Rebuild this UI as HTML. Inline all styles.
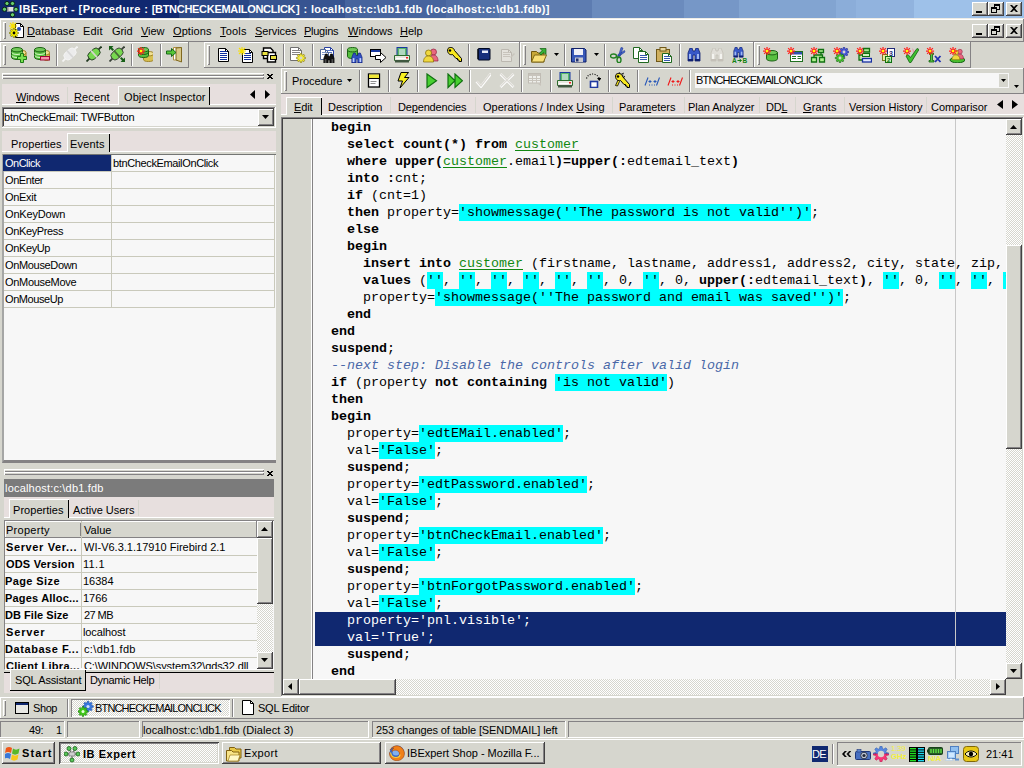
<!DOCTYPE html>
<html><head><meta charset="utf-8"><title>IBExpert</title>
<style>
html,body{margin:0;padding:0}
body{width:1024px;height:768px;overflow:hidden;background:#d6d6ce;position:relative;font-family:"Liberation Sans",sans-serif;font-size:11px;color:#000}
div,span.t,svg{position:absolute;box-sizing:border-box}
span.t{white-space:pre;line-height:13px;height:13px}
u{text-decoration:underline;text-underline-offset:1px}
.raised{background:#d6d6ce;box-shadow:inset -1px -1px #424142,inset 1px 1px #fff,inset -2px -2px #848284,inset 2px 2px #d6d6ce}
.sunken{box-shadow:inset -1px -1px #fff,inset 1px 1px #848284,inset -2px -2px #d6d6ce,inset 2px 2px #424142}
.thin{box-shadow:inset -1px -1px #fff,inset 1px 1px #848284}
.tb{box-shadow:inset -1px -1px #848284,inset 1px 1px #fff}
.dither{background:conic-gradient(#fff 25%,#d6d6ce 0 50%,#fff 0 75%,#d6d6ce 0) 0 0/2px 2px}
.code{font-family:"Liberation Mono",monospace;font-size:13.333px;line-height:17px;white-space:pre;height:17px;left:315px;color:#000}
.code b{font-weight:bold}
.code .s{background:#00ffff;display:inline-block;height:17px;vertical-align:top}
.code .g{color:#118811;text-decoration:underline;text-underline-offset:2px}
.code .c{color:#4a68a8;font-style:italic}
.sel{background:#102870;color:#fff}

</style></head>
<body>
<div class="" style="left:0px;top:0px;width:1024px;height:18px;background:linear-gradient(90deg,#102870 0px,#102870 179px,#2b4786 179px,#2b4786 249px,#375491 249px,#375491 345px,#46649e 345px,#46649e 446px,#4f6da5 446px,#4f6da5 459px,#5372a9 459px,#5372a9 499px,#5d7cb1 499px,#5d7cb1 592px,#6b8bbd 592px,#6b8bbd 684px,#7697c7 684px,#7697c7 739px,#82a4d1 739px,#82a4d1 836px,#8badd9 836px,#8badd9 856px,#91b3de 856px,#91b3de 914px,#9ec1e9 914px,#9ec1e9 1024px)"></div>
<div class="" style="left:0px;top:18px;width:1024px;height:1px;background:#eeece6"></div>
<span class="t" style="left:19px;top:3px;font-size:11px;font-weight:bold;color:#fff;letter-spacing:0.415px;">IBExpert - [Procedure : [</span>
<span class="t" style="left:155px;top:3px;font-size:11px;font-weight:bold;color:#fff;letter-spacing:-0.292px;">BTNCHECKEMAILONCLICK</span>
<span class="t" style="left:296px;top:3px;font-size:11px;font-weight:bold;color:#fff;letter-spacing:0.362px;">] : localhost:c:\db1.fdb (localhost:c:\db1.fdb)]</span>
<div class="raised" style="left:972px;top:2px;width:16px;height:14px;"></div>
<div class="" style="left:976px;top:11px;width:6px;height:2px;background:#000"></div>
<div class="raised" style="left:988px;top:2px;width:16px;height:14px;"></div>
<div class="" style="left:994px;top:4px;width:6px;height:6px;border:1px solid #000;border-top-width:2px"></div>
<div class="" style="left:991px;top:7px;width:6px;height:6px;border:1px solid #000;border-top-width:2px;background:#d6d6ce"></div>
<div class="raised" style="left:1006px;top:2px;width:16px;height:14px;"></div>
<svg style="left:1010px;top:5px" width="8" height="7" viewBox="0 0 8 7"><path d="M0 0h2l2 2 2-2h2L5 3.5 8 7H6L4 5 2 7H0l3-3.5z" fill="#000"/></svg>
<div class="raised" style="left:972px;top:24px;width:16px;height:14px;"></div>
<div class="" style="left:976px;top:33px;width:6px;height:2px;background:#000"></div>
<div class="raised" style="left:988px;top:24px;width:16px;height:14px;"></div>
<div class="" style="left:994px;top:26px;width:6px;height:6px;border:1px solid #000;border-top-width:2px"></div>
<div class="" style="left:991px;top:29px;width:6px;height:6px;border:1px solid #000;border-top-width:2px;background:#d6d6ce"></div>
<div class="raised" style="left:1006px;top:24px;width:16px;height:14px;"></div>
<svg style="left:1010px;top:27px" width="8" height="7" viewBox="0 0 8 7"><path d="M0 0h2l2 2 2-2h2L5 3.5 8 7H6L4 5 2 7H0l3-3.5z" fill="#000"/></svg>
<div class="tb" style="left:0px;top:19px;width:1024px;height:23px;"></div>
<div class="" style="left:3px;top:22px;width:3px;height:17px;box-shadow:inset 1px 1px #fff,inset -1px -1px #848284"></div>
<span class="t" style="left:27px;top:25px;font-size:11px;letter-spacing:0.058px;"><u>D</u>atabase</span>
<span class="t" style="left:83px;top:25px;font-size:11px;letter-spacing:0.177px;">Edit</span>
<span class="t" style="left:112px;top:25px;font-size:11px;letter-spacing:-0.094px;">Grid</span>
<span class="t" style="left:141px;top:25px;font-size:11px;letter-spacing:-0.052px;"><u>V</u>iew</span>
<span class="t" style="left:173px;top:25px;font-size:11px;letter-spacing:0.096px;"><u>O</u>ptions</span>
<span class="t" style="left:220px;top:25px;font-size:11px;letter-spacing:0.203px;"><u>T</u>ools</span>
<span class="t" style="left:255px;top:25px;font-size:11px;letter-spacing:-0.098px;"><u>S</u>ervices</span>
<span class="t" style="left:304px;top:25px;font-size:11px;letter-spacing:-0.263px;"><u>P</u>lugins</span>
<span class="t" style="left:348px;top:25px;font-size:11px;letter-spacing:-0.021px;"><u>W</u>indows</span>
<span class="t" style="left:400px;top:25px;font-size:11px;letter-spacing:-0.042px;"><u>H</u>elp</span>
<div class="tb" style="left:0px;top:42px;width:189px;height:26px;"></div>
<div class="" style="left:3px;top:45px;width:3px;height:20px;box-shadow:inset 1px 1px #fff,inset -1px -1px #848284"></div>
<div class="tb" style="left:204px;top:42px;width:316px;height:26px;"></div>
<div class="" style="left:207px;top:45px;width:3px;height:20px;box-shadow:inset 1px 1px #fff,inset -1px -1px #848284"></div>
<div class="tb" style="left:520px;top:42px;width:234px;height:26px;"></div>
<div class="" style="left:523px;top:45px;width:3px;height:20px;box-shadow:inset 1px 1px #fff,inset -1px -1px #848284"></div>
<div class="tb" style="left:754px;top:42px;width:217px;height:26px;"></div>
<div class="" style="left:757px;top:45px;width:3px;height:20px;box-shadow:inset 1px 1px #fff,inset -1px -1px #848284"></div>
<div class="" style="left:56px;top:44px;width:1px;height:22px;background:#848284"></div>
<div class="" style="left:57px;top:44px;width:1px;height:22px;background:#fff"></div>
<div class="" style="left:131px;top:44px;width:1px;height:22px;background:#848284"></div>
<div class="" style="left:132px;top:44px;width:1px;height:22px;background:#fff"></div>
<div class="" style="left:160px;top:44px;width:1px;height:22px;background:#848284"></div>
<div class="" style="left:161px;top:44px;width:1px;height:22px;background:#fff"></div>
<div class="" style="left:283px;top:44px;width:1px;height:22px;background:#848284"></div>
<div class="" style="left:284px;top:44px;width:1px;height:22px;background:#fff"></div>
<div class="" style="left:312px;top:44px;width:1px;height:22px;background:#848284"></div>
<div class="" style="left:313px;top:44px;width:1px;height:22px;background:#fff"></div>
<div class="" style="left:341px;top:44px;width:1px;height:22px;background:#848284"></div>
<div class="" style="left:342px;top:44px;width:1px;height:22px;background:#fff"></div>
<div class="" style="left:416px;top:44px;width:1px;height:22px;background:#848284"></div>
<div class="" style="left:417px;top:44px;width:1px;height:22px;background:#fff"></div>
<div class="" style="left:468px;top:44px;width:1px;height:22px;background:#848284"></div>
<div class="" style="left:469px;top:44px;width:1px;height:22px;background:#fff"></div>
<div class="" style="left:564px;top:44px;width:1px;height:22px;background:#848284"></div>
<div class="" style="left:565px;top:44px;width:1px;height:22px;background:#fff"></div>
<div class="" style="left:604px;top:44px;width:1px;height:22px;background:#848284"></div>
<div class="" style="left:605px;top:44px;width:1px;height:22px;background:#fff"></div>
<div class="" style="left:679px;top:44px;width:1px;height:22px;background:#848284"></div>
<div class="" style="left:680px;top:44px;width:1px;height:22px;background:#fff"></div>
<div class="" style="left:2px;top:73px;width:262px;height:3px;box-shadow:inset 1px 1px #fff,inset -1px -1px #848284"></div>
<div class="" style="left:2px;top:76px;width:262px;height:3px;box-shadow:inset 1px 1px #fff,inset -1px -1px #848284"></div>
<svg style="left:267px;top:74px" width="6" height="5" viewBox="0 0 6 5" shape-rendering="crispEdges"><path d="M0 0h2v1h2v-1h2v1h-1v1h-1v1h1v1h1v1h-2v-1h-2v1h-2v-1h1v-1h1v-1h-1v-1h-1z" fill="#000"/></svg>
<div class="" style="left:2px;top:84px;width:274px;height:20px;background:#e7dfde"></div>
<div class="" style="left:2px;top:104px;width:274px;height:1px;background:#fff"></div>
<div class="" style="left:118px;top:86px;width:92px;height:19px;background:#d6d6ce;box-shadow:inset 1px 1px #fff,inset -1px 0 #000"></div>
<div class="" style="left:67px;top:87px;width:1px;height:17px;background:#d6d6ce"></div>
<span class="t" style="left:16px;top:91px;font-size:11px;letter-spacing:-0.188px;"><u>W</u>indows</span>
<span class="t" style="left:74px;top:91px;font-size:11px;letter-spacing:0.128px;"><u>R</u>ecent</span>
<span class="t" style="left:124px;top:91px;font-size:11px;letter-spacing:0.094px;">Object Inspector</span>
<svg style="left:250px;top:90px" width="5" height="9" viewBox="0 0 5 9"><polygon points="5,0 5,9 0,4.5" fill="#000"/></svg>
<svg style="left:265px;top:90px" width="5" height="9" viewBox="0 0 5 9"><polygon points="0,0 0,9 5,4.5" fill="#000"/></svg>
<div class="sunken" style="left:2px;top:107px;width:274px;height:21px;background:#f7f7f7"></div>
<div class="raised" style="left:258px;top:109px;width:16px;height:17px;"></div>
<svg style="left:262px;top:115px" width="7" height="4" viewBox="0 0 7 4"><polygon points="0,0 7,0 3.5,4" fill="#000"/></svg>
<span class="t" style="left:4px;top:111px;font-size:11px;letter-spacing:-0.218px;">btnCheckEmail: TWFButton</span>
<div class="" style="left:2px;top:131px;width:274px;height:20px;background:#e7dfde"></div>
<div class="" style="left:2px;top:151px;width:274px;height:1px;background:#fff"></div>
<div class="" style="left:67px;top:133px;width:43px;height:19px;background:#d6d6ce;box-shadow:inset 1px 1px #fff,inset -1px 0 #000"></div>
<span class="t" style="left:11px;top:138px;font-size:11px;letter-spacing:0.040px;">Properties</span>
<span class="t" style="left:70px;top:138px;font-size:11px;letter-spacing:0.172px;">Events</span>
<div class="" style="left:2px;top:154px;width:274px;height:309px;background:#f7f7f7;border-left:2px solid #a5a6a5;border-top:1px solid #737573;border-bottom:3px solid #848284"></div>
<div class="" style="left:3px;top:155px;width:108px;height:16px;background:#102870"></div>
<span class="t" style="left:5px;top:157px;font-size:11px;color:#fff;letter-spacing:-0.503px;">OnClick</span>
<div class="" style="left:4px;top:171px;width:271px;height:1px;background:#c9c9bb"></div>
<span class="t" style="left:5px;top:174px;font-size:11px;letter-spacing:-0.411px;">OnEnter</span>
<div class="" style="left:4px;top:188px;width:271px;height:1px;background:#c9c9bb"></div>
<span class="t" style="left:5px;top:191px;font-size:11px;letter-spacing:-0.303px;">OnExit</span>
<div class="" style="left:4px;top:205px;width:271px;height:1px;background:#c9c9bb"></div>
<span class="t" style="left:5px;top:208px;font-size:11px;letter-spacing:-0.158px;">OnKeyDown</span>
<div class="" style="left:4px;top:222px;width:271px;height:1px;background:#c9c9bb"></div>
<span class="t" style="left:5px;top:225px;font-size:11px;letter-spacing:-0.361px;">OnKeyPress</span>
<div class="" style="left:4px;top:239px;width:271px;height:1px;background:#c9c9bb"></div>
<span class="t" style="left:5px;top:242px;font-size:11px;letter-spacing:-0.367px;">OnKeyUp</span>
<div class="" style="left:4px;top:256px;width:271px;height:1px;background:#c9c9bb"></div>
<span class="t" style="left:5px;top:259px;font-size:11px;letter-spacing:-0.333px;">OnMouseDown</span>
<div class="" style="left:4px;top:273px;width:271px;height:1px;background:#c9c9bb"></div>
<span class="t" style="left:5px;top:276px;font-size:11px;letter-spacing:-0.309px;">OnMouseMove</span>
<div class="" style="left:4px;top:290px;width:271px;height:1px;background:#c9c9bb"></div>
<span class="t" style="left:5px;top:293px;font-size:11px;letter-spacing:-0.408px;">OnMouseUp</span>
<div class="" style="left:4px;top:307px;width:271px;height:1px;background:#c9c9bb"></div>
<div class="" style="left:111px;top:155px;width:1px;height:153px;background:#c9c9bb"></div>
<div class="" style="left:274px;top:155px;width:1px;height:153px;background:#c9c9bb"></div>
<span class="t" style="left:113px;top:157px;font-size:11px;letter-spacing:-0.368px;">btnCheckEmailOnClick</span>
<div class="" style="left:4px;top:469px;width:260px;height:3px;box-shadow:inset 1px 1px #fff,inset -1px -1px #848284"></div>
<div class="" style="left:4px;top:472px;width:260px;height:3px;box-shadow:inset 1px 1px #fff,inset -1px -1px #848284"></div>
<svg style="left:267px;top:471px" width="6" height="5" viewBox="0 0 6 5" shape-rendering="crispEdges"><path d="M0 0h2v1h2v-1h2v1h-1v1h-1v1h1v1h1v1h-2v-1h-2v1h-2v-1h1v-1h1v-1h-1v-1h-1z" fill="#000"/></svg>
<div class="" style="left:4px;top:479px;width:270px;height:18px;background:#7b7b7b"></div>
<span class="t" style="left:5px;top:482px;font-size:11px;color:#fff;letter-spacing:0.195px;">localhost:c:\db1.fdb</span>
<div class="" style="left:4px;top:497px;width:270px;height:20px;background:#e7dfde"></div>
<div class="" style="left:4px;top:517px;width:270px;height:1px;background:#fff"></div>
<div class="" style="left:9px;top:499px;width:60px;height:19px;background:#d6d6ce;box-shadow:inset 1px 1px #fff,inset -1px 0 #000"></div>
<span class="t" style="left:13px;top:504px;font-size:11px;letter-spacing:0.040px;">Properties</span>
<span class="t" style="left:73px;top:504px;font-size:11px;letter-spacing:-0.023px;">Active Users</span>
<div class="" style="left:138px;top:500px;width:1px;height:16px;background:#d6d6ce"></div>
<div class="" style="left:4px;top:520px;width:270px;height:150px;background:#f7f7f7;border-left:1px solid #848284;border-top:1px solid #848284;border-bottom:1px solid #fff"></div>
<div class="" style="left:5px;top:521px;width:252px;height:17px;background:#d6d6ce;box-shadow:inset -1px -1px #848284,inset 1px 1px #fff"></div>
<div class="" style="left:81px;top:521px;width:1px;height:147px;background:#c9c9bb"></div>
<div class="" style="left:80px;top:523px;width:1px;height:13px;background:#848284"></div>
<span class="t" style="left:6px;top:524px;font-size:11px;letter-spacing:0.275px;">Property</span>
<span class="t" style="left:84px;top:524px;font-size:11px;letter-spacing:0.043px;">Value</span>
<span class="t" style="left:6px;top:541px;font-size:11px;font-weight:bold;letter-spacing:0.625px;">Server Ver...</span>
<span class="t" style="left:84px;top:541px;font-size:11px;letter-spacing:0.009px;">WI-V6.3.1.17910 Firebird 2.1</span>
<div class="" style="left:5px;top:555px;width:252px;height:1px;background:#c9c9bb"></div>
<span class="t" style="left:6px;top:558px;font-size:11px;font-weight:bold;letter-spacing:0.186px;">ODS Version</span>
<span class="t" style="left:83px;top:558px;font-size:11px;letter-spacing:0.302px;">11.1</span>
<div class="" style="left:5px;top:572px;width:252px;height:1px;background:#c9c9bb"></div>
<span class="t" style="left:5px;top:575px;font-size:11px;font-weight:bold;letter-spacing:0.393px;">Page Size</span>
<span class="t" style="left:83px;top:575px;font-size:11px;letter-spacing:-0.023px;">16384</span>
<div class="" style="left:5px;top:589px;width:252px;height:1px;background:#c9c9bb"></div>
<span class="t" style="left:5px;top:592px;font-size:11px;font-weight:bold;letter-spacing:0.183px;">Pages Alloc...</span>
<span class="t" style="left:83px;top:592px;font-size:11px;letter-spacing:0.005px;">1766</span>
<div class="" style="left:5px;top:606px;width:252px;height:1px;background:#c9c9bb"></div>
<span class="t" style="left:5px;top:609px;font-size:11px;font-weight:bold;letter-spacing:0.048px;">DB File Size</span>
<span class="t" style="left:84px;top:609px;font-size:11px;letter-spacing:-0.574px;">27 MB</span>
<div class="" style="left:5px;top:623px;width:252px;height:1px;background:#c9c9bb"></div>
<span class="t" style="left:6px;top:626px;font-size:11px;font-weight:bold;letter-spacing:0.847px;">Server</span>
<span class="t" style="left:83px;top:626px;font-size:11px;letter-spacing:-0.115px;">localhost</span>
<div class="" style="left:5px;top:640px;width:252px;height:1px;background:#c9c9bb"></div>
<span class="t" style="left:5px;top:643px;font-size:11px;font-weight:bold;letter-spacing:0.572px;">Database F...</span>
<span class="t" style="left:84px;top:643px;font-size:11px;letter-spacing:0.352px;">c:\db1.fdb</span>
<div class="" style="left:5px;top:657px;width:252px;height:1px;background:#c9c9bb"></div>
<div style="left:5px;top:657px;width:252px;height:12px;overflow:hidden">
<span class="t" style="left:1px;top:3px;font-size:11px;font-weight:bold;letter-spacing:0.272px;">Client Libra...</span>
<span class="t" style="left:79px;top:3px;font-size:11px;letter-spacing:-0.085px;">C:\WINDOWS\system32\gds32.dll</span>
</div>
<div class="dither" style="left:257px;top:521px;width:16px;height:148px;"></div>
<div class="raised" style="left:257px;top:521px;width:16px;height:17px;"></div>
<svg style="left:261px;top:527px" width="7" height="4" viewBox="0 0 7 4"><polygon points="0,4 7,4 3.5,0" fill="#000"/></svg>
<div class="raised" style="left:257px;top:538px;width:16px;height:66px;"></div>
<div class="raised" style="left:257px;top:652px;width:16px;height:17px;"></div>
<svg style="left:261px;top:658px" width="7" height="4" viewBox="0 0 7 4"><polygon points="0,0 7,0 3.5,4" fill="#000"/></svg>
<div class="" style="left:4px;top:672px;width:270px;height:1px;background:#000"></div>
<div class="" style="left:4px;top:673px;width:270px;height:20px;background:#e7dfde"></div>
<div class="" style="left:10px;top:670px;width:76px;height:21px;background:#d6d6ce;box-shadow:inset -1px -1px #000,inset 1px 0 #fff"></div>
<span class="t" style="left:15px;top:674px;font-size:11px;letter-spacing:-0.182px;">SQL Assistant</span>
<span class="t" style="left:90px;top:674px;font-size:11px;letter-spacing:-0.361px;">Dynamic Help</span>
<div class="" style="left:159px;top:673px;width:1px;height:16px;background:#d6d6ce"></div>
<div class="tb" style="left:281px;top:68px;width:743px;height:26px;"></div>
<div class="" style="left:284px;top:71px;width:3px;height:20px;box-shadow:inset 1px 1px #fff,inset -1px -1px #848284"></div>
<span class="t" style="left:292px;top:75px;font-size:11px;letter-spacing:-0.033px;">Procedure</span>
<svg style="left:347px;top:79px" width="5" height="3" viewBox="0 0 5 3"><polygon points="0,0 5,0 2.5,3" fill="#000"/></svg>
<div class="" style="left:359px;top:70px;width:1px;height:22px;background:#848284"></div>
<div class="" style="left:360px;top:70px;width:1px;height:22px;background:#fff"></div>
<div class="" style="left:388px;top:70px;width:1px;height:22px;background:#848284"></div>
<div class="" style="left:389px;top:70px;width:1px;height:22px;background:#fff"></div>
<div class="" style="left:417px;top:70px;width:1px;height:22px;background:#848284"></div>
<div class="" style="left:418px;top:70px;width:1px;height:22px;background:#fff"></div>
<div class="" style="left:469px;top:70px;width:1px;height:22px;background:#848284"></div>
<div class="" style="left:470px;top:70px;width:1px;height:22px;background:#fff"></div>
<div class="" style="left:521px;top:70px;width:1px;height:22px;background:#848284"></div>
<div class="" style="left:522px;top:70px;width:1px;height:22px;background:#fff"></div>
<div class="" style="left:550px;top:70px;width:1px;height:22px;background:#848284"></div>
<div class="" style="left:551px;top:70px;width:1px;height:22px;background:#fff"></div>
<div class="" style="left:579px;top:70px;width:1px;height:22px;background:#848284"></div>
<div class="" style="left:580px;top:70px;width:1px;height:22px;background:#fff"></div>
<div class="" style="left:608px;top:70px;width:1px;height:22px;background:#848284"></div>
<div class="" style="left:609px;top:70px;width:1px;height:22px;background:#fff"></div>
<div class="" style="left:637px;top:70px;width:1px;height:22px;background:#848284"></div>
<div class="" style="left:638px;top:70px;width:1px;height:22px;background:#fff"></div>
<div class="" style="left:689px;top:70px;width:1px;height:22px;background:#848284"></div>
<div class="" style="left:690px;top:70px;width:1px;height:22px;background:#fff"></div>
<div class="" style="left:695px;top:73px;width:314px;height:15px;background:#f7f7f7"></div>
<span class="t" style="left:696px;top:74px;font-size:11px;letter-spacing:-0.838px;">BTNCHECKEMAILONCLICK</span>
<div class="" style="left:999px;top:74px;width:9px;height:13px;background:#d6d6ce"></div>
<svg style="left:1001px;top:79px" width="5" height="3" viewBox="0 0 5 3"><polygon points="0,0 5,0 2.5,3" fill="#000"/></svg>
<svg style="left:1014px;top:85px" width="5" height="3" viewBox="0 0 5 3"><polygon points="0,0 5,0 2.5,3" fill="#000"/></svg>
<div class="" style="left:281px;top:94px;width:743px;height:20px;background:#e7dfde"></div>
<div class="" style="left:281px;top:114px;width:743px;height:1px;background:#fff"></div>
<div class="" style="left:286px;top:97px;width:36px;height:18px;background:#d6d6ce;box-shadow:inset 1px 1px #fff,inset -1px 0 #000"></div>
<span class="t" style="left:294px;top:101px;font-size:11px;letter-spacing:-0.156px;"><u>E</u>dit</span>
<span class="t" style="left:328px;top:101px;font-size:11px;letter-spacing:-0.053px;">Description</span>
<span class="t" style="left:398px;top:101px;font-size:11px;letter-spacing:-0.168px;">De<u>p</u>endencies</span>
<span class="t" style="left:483px;top:101px;font-size:11px;letter-spacing:0.018px;">Operations / Index <u>U</u>sing</span>
<span class="t" style="left:619px;top:101px;font-size:11px;letter-spacing:-0.040px;">Para<u>m</u>eters</span>
<span class="t" style="left:688px;top:101px;font-size:11px;letter-spacing:-0.064px;">Plan Analyzer</span>
<span class="t" style="left:766px;top:101px;font-size:11px;letter-spacing:-0.258px;">DD<u>L</u></span>
<span class="t" style="left:803px;top:101px;font-size:11px;letter-spacing:0.097px;"><u>G</u>rants</span>
<span class="t" style="left:849px;top:101px;font-size:11px;letter-spacing:-0.035px;">Version History</span>
<span class="t" style="left:931px;top:101px;font-size:11px;letter-spacing:-0.040px;">Comparisor</span>
<div class="" style="left:390px;top:97px;width:1px;height:16px;background:#d6d6ce"></div>
<div class="" style="left:475px;top:97px;width:1px;height:16px;background:#d6d6ce"></div>
<div class="" style="left:612px;top:97px;width:1px;height:16px;background:#d6d6ce"></div>
<div class="" style="left:684px;top:97px;width:1px;height:16px;background:#d6d6ce"></div>
<div class="" style="left:759px;top:97px;width:1px;height:16px;background:#d6d6ce"></div>
<div class="" style="left:795px;top:97px;width:1px;height:16px;background:#d6d6ce"></div>
<div class="" style="left:844px;top:97px;width:1px;height:16px;background:#d6d6ce"></div>
<div class="" style="left:926px;top:97px;width:1px;height:16px;background:#d6d6ce"></div>
<svg style="left:997px;top:100px" width="6" height="9" viewBox="0 0 6 9"><polygon points="6,0 6,9 0,4.5" fill="#000"/></svg>
<svg style="left:1012px;top:100px" width="6" height="9" viewBox="0 0 6 9"><polygon points="0,0 0,9 6,4.5" fill="#000"/></svg>
<div class="sunken" style="left:281px;top:117px;width:743px;height:580px;background:#f7f7f7"></div>
<div class="" style="left:283px;top:119px;width:28px;height:560px;background:#d6d6ce"></div>
<div class="" style="left:311px;top:119px;width:1px;height:560px;background:#fff"></div>
<div class="" style="left:312px;top:119px;width:1px;height:560px;background:#848284"></div>
<div class="" style="left:955px;top:119px;width:1px;height:560px;background:#c8c8c8"></div>
<div class="" style="left:315px;top:612px;width:691px;height:34px;background:#102870"></div>
<div class="" style="left:955px;top:612px;width:1px;height:34px;background:#c8c8c8"></div>
<div class="dither" style="left:1006px;top:119px;width:16px;height:560px;"></div>
<div class="raised" style="left:1006px;top:119px;width:16px;height:16px;"></div>
<svg style="left:1010px;top:125px" width="7" height="4" viewBox="0 0 7 4"><polygon points="0,4 7,4 3.5,0" fill="#000"/></svg>
<div class="raised" style="left:1006px;top:245px;width:16px;height:204px;"></div>
<div class="raised" style="left:1006px;top:663px;width:16px;height:16px;"></div>
<svg style="left:1010px;top:669px" width="7" height="4" viewBox="0 0 7 4"><polygon points="0,0 7,0 3.5,4" fill="#000"/></svg>
<div class="dither" style="left:283px;top:679px;width:723px;height:16px;"></div>
<div class="raised" style="left:283px;top:679px;width:16px;height:16px;"></div>
<svg style="left:288px;top:683px" width="4" height="7" viewBox="0 0 4 7"><polygon points="4,0 4,7 0,3.5" fill="#000"/></svg>
<div class="raised" style="left:299px;top:679px;width:97px;height:16px;"></div>
<div class="raised" style="left:990px;top:679px;width:16px;height:16px;"></div>
<svg style="left:996px;top:683px" width="4" height="7" viewBox="0 0 4 7"><polygon points="0,0 0,7 4,3.5" fill="#000"/></svg>
<div class="" style="left:1006px;top:679px;width:16px;height:16px;background:#d6d6ce"></div>
<div style="left:315px;top:119px;width:691px;height:560px;overflow:hidden">
<div class="code" style="left:0;top:0px;">  <b>begin</b></div>
<div class="code" style="left:0;top:17px;">    <b>select</b> <b>count</b><b>(*)</b> <b>from</b> <span class="g">customer</span></div>
<div class="code" style="left:0;top:34px;">    <b>where</b> <b>upper</b><b>(</b><span class="g">customer</span>.email<b>)=</b><b>upper</b><b>(:</b>edtemail_text<b>)</b></div>
<div class="code" style="left:0;top:51px;">    <b>into</b> <b>:</b>cnt;</div>
<div class="code" style="left:0;top:68px;">    <b>if</b> (cnt=1)</div>
<div class="code" style="left:0;top:85px;">    <b>then</b> property=<span class="s">&#x27;showmessage(&#x27;&#x27;The password is not valid&#x27;&#x27;)&#x27;</span>;</div>
<div class="code" style="left:0;top:102px;">    <b>else</b></div>
<div class="code" style="left:0;top:119px;">    <b>begin</b></div>
<div class="code" style="left:0;top:136px;">      <b>insert</b> <b>into</b> <span class="g">customer</span> (firstname, lastname, address1, address2, city, state, zip, </div>
<div class="code" style="left:0;top:153px;">      <b>values</b> (<span class="s">&#x27;&#x27;</span>, <span class="s">&#x27;&#x27;</span>, <span class="s">&#x27;&#x27;</span>, <span class="s">&#x27;&#x27;</span>, <span class="s">&#x27;&#x27;</span>, <span class="s">&#x27;&#x27;</span>, 0, <span class="s">&#x27;&#x27;</span>, 0, <b>upper</b><b>(:</b>edtemail_text<b>)</b>, <span class="s">&#x27;&#x27;</span>, 0, <span class="s">&#x27;&#x27;</span>, <span class="s">&#x27;&#x27;</span>, <span class="s">&#x27;&#x27;</span>,</div>
<div class="code" style="left:0;top:170px;">      property=<span class="s">&#x27;showmessage(&#x27;&#x27;The password and email was saved&#x27;&#x27;)&#x27;</span>;</div>
<div class="code" style="left:0;top:187px;">    <b>end</b></div>
<div class="code" style="left:0;top:204px;">  <b>end</b></div>
<div class="code" style="left:0;top:221px;">  <b>suspend</b>;</div>
<div class="code" style="left:0;top:238px;">  <span class="c">--next step: Disable the controls after valid login</span></div>
<div class="code" style="left:0;top:255px;">  <b>if</b> (property <b>not</b> <b>containing</b> <span class="s">&#x27;is not valid&#x27;</span>)</div>
<div class="code" style="left:0;top:272px;">  <b>then</b></div>
<div class="code" style="left:0;top:289px;">  <b>begin</b></div>
<div class="code" style="left:0;top:306px;">    property=<span class="s">&#x27;edtEMail.enabled&#x27;</span>;</div>
<div class="code" style="left:0;top:323px;">    val=<span class="s">&#x27;False&#x27;</span>;</div>
<div class="code" style="left:0;top:340px;">    <b>suspend</b>;</div>
<div class="code" style="left:0;top:357px;">    property=<span class="s">&#x27;edtPassword.enabled&#x27;</span>;</div>
<div class="code" style="left:0;top:374px;">    val=<span class="s">&#x27;False&#x27;</span>;</div>
<div class="code" style="left:0;top:391px;">    <b>suspend</b>;</div>
<div class="code" style="left:0;top:408px;">    property=<span class="s">&#x27;btnCheckEmail.enabled&#x27;</span>;</div>
<div class="code" style="left:0;top:425px;">    val=<span class="s">&#x27;False&#x27;</span>;</div>
<div class="code" style="left:0;top:442px;">    <b>suspend</b>;</div>
<div class="code" style="left:0;top:459px;">    property=<span class="s">&#x27;btnForgotPassword.enabled&#x27;</span>;</div>
<div class="code" style="left:0;top:476px;">    val=<span class="s">&#x27;False&#x27;</span>;</div>
<div class="code" style="left:0;top:493px;color:#fff;">    property=&#x27;pnl.visible&#x27;;</div>
<div class="code" style="left:0;top:510px;color:#fff;">    val=&#x27;True&#x27;;</div>
<div class="code" style="left:0;top:527px;">    <b>suspend</b>;</div>
<div class="code" style="left:0;top:544px;">  <b>end</b></div>
</div>
<div class="tb" style="left:0px;top:697px;width:1024px;height:22px;"></div>
<div class="" style="left:3px;top:700px;width:3px;height:16px;box-shadow:inset 1px 1px #fff,inset -1px -1px #848284"></div>
<span class="t" style="left:33px;top:702px;font-size:11px;letter-spacing:-0.401px;">Shop</span>
<div class="" style="left:67px;top:699px;width:1px;height:18px;background:#848284"></div>
<div class="" style="left:68px;top:699px;width:1px;height:18px;background:#fff"></div>
<div class="dither" style="left:71px;top:699px;width:159px;height:18px;box-shadow:inset 1px 1px #848284,inset -1px -1px #fff"></div>
<span class="t" style="left:95px;top:702px;font-size:11px;letter-spacing:-0.838px;">BTNCHECKEMAILONCLICK</span>
<div class="" style="left:232px;top:699px;width:1px;height:18px;background:#848284"></div>
<div class="" style="left:233px;top:699px;width:1px;height:18px;background:#fff"></div>
<span class="t" style="left:258px;top:702px;font-size:11px;letter-spacing:-0.212px;">SQL Editor</span>
<div class="thin" style="left:0px;top:721px;width:65px;height:17px;"></div>
<div class="thin" style="left:67px;top:721px;width:73px;height:17px;"></div>
<div class="thin" style="left:142px;top:721px;width:227px;height:17px;"></div>
<div class="thin" style="left:372px;top:721px;width:194px;height:17px;"></div>
<div class="thin" style="left:568px;top:721px;width:456px;height:17px;"></div>
<span class="t" style="left:29px;top:724px;font-size:11px;letter-spacing:-0.398px;">49:</span>
<span class="t" style="left:56px;top:724px;font-size:11px;">1</span>
<span class="t" style="left:143px;top:724px;font-size:11px;letter-spacing:0.082px;">localhost:c:\db1.fdb (Dialect 3)</span>
<span class="t" style="left:376px;top:724px;font-size:11px;letter-spacing:-0.108px;">253 changes of table [SENDMAIL] left</span>
<div class="" style="left:0px;top:739px;width:1024px;height:1px;background:#fff"></div>
<div class="raised" style="left:2px;top:742px;width:53px;height:22px;"></div>
<span class="t" style="left:22px;top:747px;font-size:11px;font-weight:bold;letter-spacing:1.109px;">Start</span>
<div class="dither" style="left:59px;top:742px;width:160px;height:22px;box-shadow:inset 1px 1px #424142,inset -1px -1px #fff,inset 2px 2px #848284,inset -2px -2px #d6d6ce"></div>
<span class="t" style="left:83px;top:748px;font-size:11px;font-weight:bold;letter-spacing:0.525px;">IB Expert</span>
<div class="raised" style="left:222px;top:742px;width:159px;height:22px;"></div>
<span class="t" style="left:244px;top:747px;font-size:11px;letter-spacing:0.341px;">Export</span>
<div class="raised" style="left:385px;top:742px;width:160px;height:22px;"></div>
<span class="t" style="left:407px;top:747px;font-size:11px;letter-spacing:-0.006px;">IBExpert Shop - Mozilla F...</span>
<div class="" style="left:812px;top:746px;width:16px;height:16px;background:#102870"></div>
<span class="t" style="left:812px;top:748px;font-size:11px;color:#fff;letter-spacing:-0.781px;">DE</span>
<div class="" style="left:832px;top:744px;width:1px;height:20px;background:#848284"></div>
<div class="" style="left:833px;top:744px;width:1px;height:20px;background:#fff"></div>
<div class="thin" style="left:837px;top:742px;width:185px;height:24px;"></div>
<svg style="left:842px;top:751px" width="9" height="6" viewBox="0 0 9 6"><path d="M3 0h1.500L2 3l2.500 3H3L0.300 3zM7.500 0H9L6.500 3 9 6H7.500L4.800 3z" fill="#000" stroke="#000" stroke-width=".5"/></svg>
<span class="t" style="left:986px;top:748px;font-size:11px;letter-spacing:-0.008px;">21:41</span>
<svg style="left:9px;top:22px" width="16" height="16" viewBox="0 0 16 16"><path d="M6.5 1.5h5l3 3v11h-8z" fill="#fff" stroke="#000"/><path d="M11.5 1.5v3h3" fill="none" stroke="#000"/><path d="M4 0v8M0 4h8M1 1l6 6M7 1l-6 6" stroke="#f8e000" stroke-width="1.100"/><circle cx="10" cy="7" r="2" fill="#2848b0"/><polygon points="9.56,10.40 9.56,11.60 8.20,11.86 7.87,12.65 8.65,13.80 7.80,14.65 6.65,13.87 5.86,14.20 5.60,15.56 4.40,15.56 4.14,14.20 3.35,13.87 2.20,14.65 1.35,13.80 2.13,12.65 1.80,11.86 0.44,11.60 0.44,10.40 1.80,10.14 2.13,9.35 1.35,8.20 2.20,7.35 3.35,8.13 4.14,7.80 4.40,6.44 5.60,6.44 5.86,7.80 6.65,8.13 7.80,7.35 8.65,8.20 7.87,9.35 8.20,10.14" fill="#f8f000" stroke="#606000" stroke-width=".6"/><circle cx="5" cy="11" r="1.38" fill="#000"/></svg>
<svg style="left:11px;top:47px" width="16" height="16" viewBox="0 0 16 16"><path d="M9 5.7v4.6a3.0 2.2 0 0 0 6 0v-4.6z" fill="#d8c050" stroke="#a08428" stroke-width="1"/><ellipse cx="12.0" cy="5.7" rx="3.0" ry="2.2" fill="#f0e090" stroke="#a08428" stroke-width="1"/><path d="M0.5 2.7v7.6a5.5 2.2 0 0 0 11 0v-7.6z" fill="#58c040" stroke="#1c6414" stroke-width="1"/><ellipse cx="6.0" cy="2.7" rx="5.5" ry="2.2" fill="#70c858" stroke="#1c6414" stroke-width="1"/><path d="M1 5.500a5 2 0 0 0 10 0M1 8.500a5 2 0 0 0 10 0" stroke="#d8f8c8" fill="none"/><path d="M9.500 6.500h3v3h3v3h-3v3h-3v-3h-3v-3h3z" fill="#78e050" stroke="#1c7c14"/></svg>
<svg style="left:34px;top:47px" width="16" height="16" viewBox="0 0 16 16"><path d="M9.5 5.7v5.6a3.0 2.2 0 0 0 6 0v-5.6z" fill="#d8c050" stroke="#a08428" stroke-width="1"/><ellipse cx="12.5" cy="5.7" rx="3.0" ry="2.2" fill="#f0e090" stroke="#a08428" stroke-width="1"/><path d="M0.5 2.7v7.6a5.5 2.2 0 0 0 11 0v-7.6z" fill="#58c040" stroke="#1c6414" stroke-width="1"/><ellipse cx="6.0" cy="2.7" rx="5.5" ry="2.2" fill="#70c858" stroke="#1c6414" stroke-width="1"/><path d="M1 5.500a5 2 0 0 0 10 0M1 8.500a5 2 0 0 0 10 0" stroke="#d8f8c8" fill="none"/><rect x="6.500" y="9.500" width="9" height="3.500" fill="#f890a8" stroke="#a00838"/></svg>
<svg style="left:62px;top:46px" width="16" height="16" viewBox="0 0 16 16"><path d="M0.500 15.500L15.500 0.500" stroke="#f4f4f4" stroke-width="1.800"/><g transform="rotate(-42 8 8)"><rect x="1.500" y="4" width="13" height="8" rx="3.500" fill="#ececec" stroke="#f4f4f4" stroke-width=".9"/><rect x="7.200" y="3.500" width="1.600" height="9" fill="#d8d8d8"/></g></svg>
<svg style="left:86px;top:46px" width="16" height="16" viewBox="0 0 16 16"><path d="M0.500 15.500L15.500 0.500" stroke="#203820" stroke-width="1.800"/><g transform="rotate(-42 8 8)"><rect x="1.500" y="4" width="13" height="8" rx="3.500" fill="#78d850" stroke="#203820" stroke-width=".9"/><rect x="7.200" y="3.500" width="1.600" height="9" fill="#d6d6ce"/></g></svg>
<svg style="left:109px;top:46px" width="16" height="16" viewBox="0 0 16 16"><path d="M0.500 15.500L15.500 0.500" stroke="#384038" stroke-width="1.800"/><g transform="rotate(-42 8 8)"><rect x="1.500" y="4" width="13" height="8" rx="3.500" fill="#78d850" stroke="#384038" stroke-width=".9"/><rect x="7.200" y="3.500" width="1.600" height="9" fill="#486838"/></g><path d="M0 0h4.500l-1.500 1.500 2 2-1.500 1.500-2-2L0 4.500z" fill="#186018"/><g transform="rotate(180 8 8)"><path d="M0 0h4.500l-1.500 1.500 2 2-1.500 1.500-2-2L0 4.500z" fill="#186018"/></g></svg>
<svg style="left:137px;top:47px" width="16" height="16" viewBox="0 0 16 16"><path d="M6.5 6.7v5.6a5.0 2.2 0 0 0 10 0v-5.6z" fill="#d8c050" stroke="#a08428" stroke-width="1"/><ellipse cx="11.5" cy="6.7" rx="5.0" ry="2.2" fill="#f0e090" stroke="#a08428" stroke-width="1"/><path d="M1.5 2.7v5.6a5.0 2.2 0 0 0 10 0v-5.6z" fill="#58c040" stroke="#1c6414" stroke-width="1"/><ellipse cx="6.5" cy="2.7" rx="5.0" ry="2.2" fill="#70c858" stroke="#1c6414" stroke-width="1"/><path d="M2 5.500a4.500 2 0 0 0 9 0" stroke="#186018" fill="none"/><g transform="scale(1.15)"><path d="M3.5 0v7M0 3.500h7M1 1l5 5M6 1l-5 5" stroke="#f22" stroke-width="1.1" fill="none"/><rect x="2.500" y="2.500" width="2" height="2" fill="#ff0"/></g></svg>
<svg style="left:166px;top:47px" width="16" height="16" viewBox="0 0 16 16"><path d="M7.500 0.500h8v12.500h-8z" fill="#fff" stroke="#b09040"/><path d="M10 1l5.500-.5v14.500l-5.500-2z" fill="#d8c888" stroke="#806820"/><path d="M0.500 4h5v-2.500l4.500 4-4.500 4v-2.500h-5z" fill="#58c838" stroke="#186818"/></svg>
<svg style="left:217px;top:47px" width="16" height="16" viewBox="0 0 16 16"><path d="M1.5 1.5h7l3 3v10h-10z" fill="#fff" stroke="#000"/><path d="M8.5 1.5v3h3" fill="none" stroke="#000"/><rect x="3" y="4" width="7" height="1" fill="#1030a0"/><rect x="3" y="6" width="7" height="1" fill="#1030a0"/><rect x="3" y="8" width="7" height="1" fill="#1030a0"/><rect x="3" y="10" width="7" height="1" fill="#1030a0"/><rect x="3" y="12" width="7" height="1" fill="#1030a0"/></svg>
<svg style="left:238px;top:47px" width="16" height="16" viewBox="0 0 16 16"><path d="M4.5 2.5h7l3 3v10h-10z" fill="#fff" stroke="#000"/><path d="M11.5 2.5v3h3" fill="none" stroke="#000"/><rect x="6" y="6" width="7" height="1" fill="#1030a0"/><rect x="6" y="8" width="7" height="1" fill="#1030a0"/><rect x="6" y="10" width="7" height="1" fill="#1030a0"/><rect x="6" y="12" width="7" height="1" fill="#1030a0"/><path d="M4 0v8M0 4h8M1 1l6 6M7 1l-6 6" stroke="#f8e000" stroke-width="1.100"/></svg>
<svg style="left:261px;top:47px" width="16" height="16" viewBox="0 0 16 16"><path d="M2.500 1h7l2.500 2.500v8h-9.500z" fill="#fff" stroke="#000" stroke-width="1.400"/><path d="M6.500 5.500h8v9.500h-8z" fill="#fff" stroke="#000" stroke-width="1.400"/><rect x="1" y="4.500" width="6" height="4" fill="#e8e040" stroke="#000"/><rect x="9.500" y="8.500" width="6" height="4" fill="#e8e040" stroke="#000"/></svg>
<svg style="left:290px;top:47px" width="16" height="16" viewBox="0 0 16 16"><path d="M0.5 0.5h8l3 3v10h-11z" fill="#fff" stroke="#707070"/><path d="M8.5 0.5v3h3" fill="none" stroke="#707070"/><rect x="2" y="3" width="8" height="1" fill="#848284"/><rect x="2" y="5" width="8" height="1" fill="#848284"/><rect x="2" y="7" width="8" height="1" fill="#848284"/><polygon points="15.56,10.40 15.56,11.60 14.20,11.86 13.87,12.65 14.65,13.80 13.80,14.65 12.65,13.87 11.86,14.20 11.60,15.56 10.40,15.56 10.14,14.20 9.35,13.87 8.20,14.65 7.35,13.80 8.13,12.65 7.80,11.86 6.44,11.60 6.44,10.40 7.80,10.14 8.13,9.35 7.35,8.20 8.20,7.35 9.35,8.13 10.14,7.80 10.40,6.44 11.60,6.44 11.86,7.80 12.65,8.13 13.80,7.35 14.65,8.20 13.87,9.35 14.20,10.14" fill="#f0e838" stroke="#807000" stroke-width=".6"/><circle cx="11" cy="11" r="1.38" fill="#d6d6ce"/></svg>
<svg style="left:319px;top:47px" width="16" height="16" viewBox="0 0 16 16"><path d="M5.5 0.5h6l3 3v8h-9z" fill="#fff" stroke="#2840a0"/><path d="M11.5 0.5v3h3" fill="none" stroke="#2840a0"/><rect x="7" y="3" width="6" height="1" fill="#5878c8"/><rect x="7" y="5" width="6" height="1" fill="#5878c8"/><path d="M1.5 2.5h5l3 3v7h-8z" fill="#fff" stroke="#506898"/><path d="M6.5 2.5v3h3" fill="none" stroke="#506898"/><rect x="3" y="5" width="5" height="1" fill="#8098c8"/><rect x="3" y="7" width="5" height="1" fill="#8098c8"/><g transform="translate(4 7) scale(0.85)"><path d="M1 5l2-5h2l1 3h2l1-3h2l2 5v8h-5v-6h-2v6h-5z" fill="#101010" stroke="#000" stroke-width=".8"/><rect x="2" y="6" width="2" height="5" fill="#505050"/><rect x="10" y="6" width="2" height="5" fill="#505050"/><rect x="1" y="11" width="5" height="2" fill="#000"/><rect x="8" y="11" width="5" height="2" fill="#000"/></g></svg>
<svg style="left:347px;top:47px" width="16" height="16" viewBox="0 0 16 16"><path d="M0.5 2.7v6.6a5.0 2.2 0 0 0 10 0v-6.6z" fill="#58c040" stroke="#1c6414" stroke-width="1"/><ellipse cx="5.5" cy="2.7" rx="5.0" ry="2.2" fill="#70c858" stroke="#1c6414" stroke-width="1"/><g transform="translate(4 6) scale(0.85)"><path d="M1 5l2-5h2l1 3h2l1-3h2l2 5v8h-5v-6h-2v6h-5z" fill="#3050c0" stroke="#102080" stroke-width=".8"/><rect x="2" y="6" width="2" height="5" fill="#c0d0ff"/><rect x="10" y="6" width="2" height="5" fill="#c0d0ff"/><rect x="1" y="11" width="5" height="2" fill="#102080"/><rect x="8" y="11" width="5" height="2" fill="#102080"/></g></svg>
<svg style="left:370px;top:47px" width="16" height="16" viewBox="0 0 16 16"><rect x="0.500" y="2.500" width="10" height="7" fill="#fff" stroke="#000"/><rect x="1" y="3" width="9" height="2" fill="#1838a0"/><path d="M5.500 8.500h5v-3l5.500 5-5.500 5v-3h-5z" fill="#fff" stroke="#000"/></svg>
<svg style="left:394px;top:47px" width="16" height="16" viewBox="0 0 16 16"><rect x="3" y="0.500" width="10" height="9" fill="#58b868" stroke="#1838a0"/><rect x="5" y="2" width="6" height="6" fill="#b0d8c0"/><path d="M0.500 8.500h15v5h-15z" fill="#e8e8e0" stroke="#2c6c2c"/><rect x="1" y="13" width="14" height="2.500" fill="#405840"/><rect x="2" y="11" width="10" height="1" fill="#fff"/><rect x="12" y="10" width="2" height="1.500" fill="#f02020"/></svg>
<svg style="left:423px;top:48px" width="16" height="16" viewBox="0 0 16 16"><circle cx="10.500" cy="4" r="3" fill="#e86880" stroke="#902040" stroke-width=".7"/><path d="M6 13c0-4 2-6 4.500-6s4.500 2 4.500 6z" fill="#e86880" stroke="#902040" stroke-width=".7"/><circle cx="5.500" cy="5" r="3" fill="#f0d840" stroke="#806800" stroke-width=".7"/><path d="M0.500 14c0-4 2-6 5-6s5 2 5 6z" fill="#f0d840" stroke="#806800" stroke-width=".7"/></svg>
<svg style="left:446px;top:47px" width="16" height="16" viewBox="0 0 16 16"><path d="M2 1.500c2-2 6-1 6.500 2l7 8v3h-2.500v-1.500h-1.500v-1.500h-1.500l-3.500-4c-3 1-6-2-4.500-6z" fill="#f8e820" stroke="#000" stroke-width="1"/><circle cx="4" cy="3.500" r="1.200" fill="#000"/></svg>
<svg style="left:476px;top:48px" width="16" height="16" viewBox="0 0 16 16"><rect x="2" y="0.500" width="12" height="11.500" rx="1" fill="#18307c" stroke="#000820"/><rect x="6" y="2.500" width="6" height="2.500" fill="#e8ecf8"/><path d="M1 2h2M1 4h2M1 6h2M1 8h2M1 10h2" stroke="#000"/></svg>
<svg style="left:500px;top:48px" width="16" height="16" viewBox="0 0 16 16"><path d="M1.5 1.5h7l3 3v9h-10z" fill="#e4e2dc" stroke="#bcb8b0"/><path d="M8.5 1.5v3h3" fill="none" stroke="#bcb8b0"/><rect x="3" y="4" width="7" height="1" fill="#c8c4bc"/><rect x="3" y="6" width="7" height="1" fill="#c8c4bc"/><rect x="3" y="8" width="7" height="1" fill="#c8c4bc"/><path d="M10 9l4-4 1 1-4 4z" fill="#c8c4bc"/></svg>
<svg style="left:531px;top:48px" width="16" height="16" viewBox="0 0 16 16"><path d="M0.500 3.500h5l1.500 1.500h6v9h-12.500z" fill="#c8a838" stroke="#705810"/><path d="M0.500 14l3-7h12l-3 7z" fill="#f8e078" stroke="#806818"/><path d="M9 0.500h6v6l-2-2-3 2.500-1.500-1.500 2.500-3z" fill="#38b038" stroke="#106010" stroke-width=".7"/></svg>
<svg style="left:554px;top:53px" width="5" height="3" viewBox="0 0 5 3"><polygon points="0,0 5,0 2.5,3" fill="#000"/></svg>
<svg style="left:571px;top:48px" width="16" height="16" viewBox="0 0 16 16"><path d="M0.500 0.500h13l1.500 1.500v12h-14.500z" fill="#3858b8" stroke="#102068"/><rect x="3" y="1" width="9" height="6" fill="#f0f0f8"/><rect x="4" y="9.500" width="8" height="4.500" fill="#c8c8d0"/><rect x="5" y="10.500" width="2.500" height="3" fill="#203070"/></svg>
<svg style="left:594px;top:53px" width="5" height="3" viewBox="0 0 5 3"><polygon points="0,0 5,0 2.5,3" fill="#000"/></svg>
<svg style="left:610px;top:47px" width="16" height="16" viewBox="0 0 16 16"><path d="M8.500 9L11 0.500l2 .5L10 9.500zM7.500 8L14.500 3.500l.5 1.500-6.500 4.500z" fill="#4868d0" stroke="#203890" stroke-width=".6"/><ellipse cx="3.500" cy="9" rx="3" ry="2" fill="none" stroke="#208020" stroke-width="1.400"/><ellipse cx="9" cy="13" rx="2" ry="2.700" fill="none" stroke="#208020" stroke-width="1.400"/><path d="M6 9.500l3 1" stroke="#208020" stroke-width="1.500"/></svg>
<svg style="left:633px;top:47px" width="16" height="16" viewBox="0 0 16 16"><path d="M0.5 0.5h6l3 3v8h-9z" fill="#fff" stroke="#206820"/><path d="M6.5 0.5v3h3" fill="none" stroke="#206820"/><path d="M5.5 4.5h7l3 3v8h-10z" fill="#fff" stroke="#206820"/><path d="M12.5 4.5v3h3" fill="none" stroke="#206820"/><rect x="7" y="8" width="7" height="1" fill="#3858b0"/><rect x="7" y="10" width="7" height="1" fill="#3858b0"/><rect x="7" y="12" width="7" height="1" fill="#3858b0"/></svg>
<svg style="left:656px;top:47px" width="16" height="16" viewBox="0 0 16 16"><rect x="0.500" y="2.500" width="13" height="12" fill="#d0b060" stroke="#705818"/><rect x="4" y="0.500" width="6" height="3.500" fill="#e8d8a0" stroke="#705818"/><path d="M6.5 6.5h6l3 3v6h-9z" fill="#fff" stroke="#206820"/><path d="M12.5 6.5v3h3" fill="none" stroke="#206820"/><rect x="8" y="9" width="6" height="1" fill="#3858b0"/><rect x="8" y="11" width="6" height="1" fill="#3858b0"/><rect x="8" y="13" width="6" height="1" fill="#3858b0"/></svg>
<svg style="left:686px;top:48px" width="16" height="16" viewBox="0 0 16 16"><g transform="translate(1 0) scale(1.0)"><path d="M1 5l2-5h2l1 3h2l1-3h2l2 5v8h-5v-6h-2v6h-5z" fill="#3858c8" stroke="#102070" stroke-width=".8"/><rect x="2" y="6" width="2" height="5" fill="#a0b8f0"/><rect x="10" y="6" width="2" height="5" fill="#a0b8f0"/><rect x="1" y="11" width="5" height="2" fill="#102070"/><rect x="8" y="11" width="5" height="2" fill="#102070"/></g></svg>
<svg style="left:709px;top:48px" width="16" height="16" viewBox="0 0 16 16"><g transform="translate(1 0) scale(1.0)"><path d="M1 5l2-5h2l1 3h2l1-3h2l2 5v8h-5v-6h-2v6h-5z" fill="#e0ded8" stroke="#c4c0b8" stroke-width=".8"/><rect x="2" y="6" width="2" height="5" fill="#f4f4f0"/><rect x="10" y="6" width="2" height="5" fill="#f4f4f0"/><rect x="1" y="11" width="5" height="2" fill="#c4c0b8"/><rect x="8" y="11" width="5" height="2" fill="#c4c0b8"/></g></svg>
<svg style="left:732px;top:47px" width="16" height="16" viewBox="0 0 16 16"><g transform="translate(1 0) scale(0.78)"><path d="M1 5l2-5h2l1 3h2l1-3h2l2 5v8h-5v-6h-2v6h-5z" fill="#3858c8" stroke="#102070" stroke-width=".8"/><rect x="2" y="6" width="2" height="5" fill="#a0b8f0"/><rect x="10" y="6" width="2" height="5" fill="#a0b8f0"/><rect x="1" y="11" width="5" height="2" fill="#102070"/><rect x="8" y="11" width="5" height="2" fill="#102070"/></g><text x="0" y="16" font-family="Liberation Sans" font-weight="bold" font-size="6.500" fill="#108010">A</text><path d="M5.500 13.500h3.500M7.500 12l2 1.500-2 1.500" stroke="#108010" fill="none" stroke-width="1"/><text x="10.500" y="16" font-family="Liberation Sans" font-weight="bold" font-size="6.500" fill="#108010">B</text></svg>
<svg style="left:763px;top:47px" width="16" height="16" viewBox="0 0 16 16"><path d="M3.5 5.7v6.1a5.5 2.2 0 0 0 11 0v-6.1z" fill="#58c040" stroke="#1c6414" stroke-width="1"/><ellipse cx="9.0" cy="5.7" rx="5.5" ry="2.2" fill="#70c858" stroke="#1c6414" stroke-width="1"/><g transform="scale(1.15)"><path d="M3.5 0v7M0 3.500h7M1 1l5 5M6 1l-5 5" stroke="#f22" stroke-width="1.1" fill="none"/><rect x="2.500" y="2.500" width="2" height="2" fill="#ff0"/></g></svg>
<svg style="left:787px;top:47px" width="16" height="16" viewBox="0 0 16 16"><rect x="3.500" y="4.500" width="12" height="10" fill="#fff" stroke="#207020"/><rect x="4" y="5" width="11" height="2.500" fill="#3050b0"/><path d="M5 9.500h4M5 11.500h4M10.500 9.500h3.500M10.500 11.500h3.500" stroke="#207020"/><g transform="scale(1.15)"><path d="M3.5 0v7M0 3.500h7M1 1l5 5M6 1l-5 5" stroke="#f22" stroke-width="1.1" fill="none"/><rect x="2.500" y="2.500" width="2" height="2" fill="#ff0"/></g></svg>
<svg style="left:810px;top:47px" width="16" height="16" viewBox="0 0 16 16"><path d="M8.500 2.500h5v3h-5zM1.500 10.500h5v4.500h-5zM9.500 10.500h5v4.500h-5zM11 5.500v2.500M4 10.500v-2.500h8.500v2.500" fill="#b0f090" stroke="#107010" stroke-width="1.300"/><g transform="scale(1.15)"><path d="M3.5 0v7M0 3.500h7M1 1l5 5M6 1l-5 5" stroke="#f22" stroke-width="1.1" fill="none"/><rect x="2.500" y="2.500" width="2" height="2" fill="#ff0"/></g></svg>
<svg style="left:833px;top:47px" width="16" height="16" viewBox="0 0 16 16"><polygon points="15.76,4.38 15.76,5.62 14.34,5.90 13.99,6.73 14.81,7.93 13.93,8.81 12.73,7.99 11.90,8.34 11.62,9.76 10.38,9.76 10.10,8.34 9.27,7.99 8.07,8.81 7.19,7.93 8.01,6.73 7.66,5.90 6.24,5.62 6.24,4.38 7.66,4.10 8.01,3.27 7.19,2.07 8.07,1.19 9.27,2.01 10.10,1.66 10.38,0.24 11.62,0.24 11.90,1.66 12.73,2.01 13.93,1.19 14.81,2.07 13.99,3.27 14.34,4.10" fill="#4858d8" stroke="#182088" stroke-width=".6"/><circle cx="11" cy="5" r="1.44" fill="#d6d6ce"/><polygon points="11.76,10.38 11.76,11.62 10.34,11.90 9.99,12.73 10.81,13.93 9.93,14.81 8.73,13.99 7.90,14.34 7.62,15.76 6.38,15.76 6.10,14.34 5.27,13.99 4.07,14.81 3.19,13.93 4.01,12.73 3.66,11.90 2.24,11.62 2.24,10.38 3.66,10.10 4.01,9.27 3.19,8.07 4.07,7.19 5.27,8.01 6.10,7.66 6.38,6.24 7.62,6.24 7.90,7.66 8.73,8.01 9.93,7.19 10.81,8.07 9.99,9.27 10.34,10.10" fill="#48c030" stroke="#106010" stroke-width=".6"/><circle cx="7" cy="11" r="1.44" fill="#d6d6ce"/><g transform="scale(1.15)"><path d="M3.5 0v7M0 3.500h7M1 1l5 5M6 1l-5 5" stroke="#f22" stroke-width="1.1" fill="none"/><rect x="2.500" y="2.500" width="2" height="2" fill="#ff0"/></g></svg>
<svg style="left:856px;top:47px" width="16" height="16" viewBox="0 0 16 16"><path d="M7.500 1.500h6v3.500h-6zM3 5v8h3M3 8h3" fill="#a8e890" stroke="#107010" stroke-width="1.300"/><rect x="6.500" y="6.500" width="7" height="3" fill="#d0f0c0" stroke="#107010"/><rect x="6.500" y="11.500" width="9" height="3.500" fill="#e0e8ff" stroke="#1830a0" stroke-width="1.300"/><g transform="scale(1.15)"><path d="M3.5 0v7M0 3.500h7M1 1l5 5M6 1l-5 5" stroke="#f22" stroke-width="1.1" fill="none"/><rect x="2.500" y="2.500" width="2" height="2" fill="#ff0"/></g></svg>
<svg style="left:879px;top:47px" width="16" height="16" viewBox="0 0 16 16"><rect x="8.500" y="1.500" width="7" height="8" fill="#fff" stroke="#202878"/><text x="10" y="8.500" font-family="Liberation Sans" font-weight="bold" font-size="7" fill="#202878">3</text><rect x="3.500" y="7.500" width="5" height="6" fill="#e8e8a0" stroke="#787820"/><rect x="6.500" y="9.500" width="6" height="6" fill="#c8f0b0" stroke="#107010"/><text x="8" y="15" font-family="Liberation Sans" font-weight="bold" font-size="6" fill="#107010">2</text><g transform="scale(1.15)"><path d="M3.5 0v7M0 3.500h7M1 1l5 5M6 1l-5 5" stroke="#f22" stroke-width="1.1" fill="none"/><rect x="2.500" y="2.500" width="2" height="2" fill="#ff0"/></g></svg>
<svg style="left:903px;top:47px" width="16" height="16" viewBox="0 0 16 16"><path d="M9 1l3 3-2 2z" fill="#e0a0b0"/><path d="M3 9l2-1.500 2.500 3L14 1.500l2 1L8 15.500H6.500z" fill="#40c030" stroke="#106010" stroke-width=".8"/><g transform="scale(1.15)"><path d="M3.5 0v7M0 3.500h7M1 1l5 5M6 1l-5 5" stroke="#f22" stroke-width="1.1" fill="none"/><rect x="2.500" y="2.500" width="2" height="2" fill="#ff0"/></g></svg>
<svg style="left:926px;top:47px" width="16" height="16" viewBox="0 0 16 16"><path d="M3.500 6h4v1.500h-1v6h1.500v1.500h-5v-1.500h1.500v-6h-1z" fill="#58c840" stroke="#106010" stroke-width=".8"/><path d="M9 9l5.500 6M14.500 9l-5.500 6" stroke="#2030b0" stroke-width="1.800"/><g transform="scale(1.15)"><path d="M3.5 0v7M0 3.500h7M1 1l5 5M6 1l-5 5" stroke="#f22" stroke-width="1.1" fill="none"/><rect x="2.500" y="2.500" width="2" height="2" fill="#ff0"/></g></svg>
<svg style="left:949px;top:47px" width="16" height="16" viewBox="0 0 16 16"><ellipse cx="8.500" cy="13" rx="7.500" ry="2.800" fill="#48c030" stroke="#106010"/><g transform="translate(2.500 1.500) scale(.8)"><circle cx="10.500" cy="4" r="3" fill="#e86880" stroke="#902040" stroke-width=".7"/><path d="M6 13c0-4 2-6 4.500-6s4.500 2 4.500 6z" fill="#e86880" stroke="#902040" stroke-width=".7"/><circle cx="5.500" cy="5" r="3" fill="#f0d840" stroke="#806800" stroke-width=".7"/><path d="M0.500 14c0-4 2-6 5-6s5 2 5 6z" fill="#f0d840" stroke="#806800" stroke-width=".7"/></g><g transform="scale(1.15)"><path d="M3.5 0v7M0 3.500h7M1 1l5 5M6 1l-5 5" stroke="#f22" stroke-width="1.1" fill="none"/><rect x="2.500" y="2.500" width="2" height="2" fill="#ff0"/></g></svg>
<svg style="left:367px;top:73px" width="16" height="16" viewBox="0 0 16 16"><rect x="1.500" y="1" width="11" height="13" fill="#fff" stroke="#000" stroke-width="1.300"/><rect x="2" y="1.500" width="10" height="3.500" fill="#f0e838"/><path d="M2 5.500h10" stroke="#000"/><path d="M3.500 8.500h6M3.500 10.500h5" stroke="#909090"/></svg>
<svg style="left:395px;top:72px" width="16" height="16" viewBox="0 0 16 16"><path d="M6 0.500h7.500l-4 5h4.500l-9 10.500 2.500-7h-4.500z" fill="#f8f020" stroke="#000" stroke-width="1"/></svg>
<svg style="left:425px;top:73px" width="16" height="16" viewBox="0 0 16 16"><path d="M2 1v13.500l9.500-6.750z" fill="#48d030" stroke="#107010" stroke-width="1.200"/></svg>
<svg style="left:447px;top:73px" width="16" height="16" viewBox="0 0 16 16"><path d="M1 1v13.500l7-6.750zM8 1v13.500l7.500-6.750z" fill="#48d030" stroke="#107010" stroke-width="1.200"/></svg>
<svg style="left:475px;top:72px" width="16" height="16" viewBox="0 0 16 16"><path d="M1.500 9.500l4.500 5 10-13" stroke="#fff" stroke-width="2.600" fill="none"/><path d="M1.500 9l4.500 5 9.500-12.500" stroke="#dcdad4" stroke-width="1.400" fill="none"/></svg>
<svg style="left:499px;top:72px" width="16" height="16" viewBox="0 0 16 16"><path d="M1.500 2l13 13M14.500 2l-13 13" stroke="#fff" stroke-width="2.600" fill="none"/><path d="M1.500 1.500l13 13M14.500 1.500l-13 13" stroke="#dcdad4" stroke-width="1.400" fill="none"/></svg>
<svg style="left:528px;top:73px" width="16" height="16" viewBox="0 0 16 16"><rect x="0.500" y="0.500" width="12" height="9.500" fill="#eeeeea" stroke="#c0bcb4"/><rect x="1" y="1" width="11" height="2" fill="#c8c4bc"/><path d="M4.500 3v7M8.500 3v7M1 5.500h11M1 7.500h11" stroke="#c8c4bc"/><path d="M10 11l3 2v-3z" fill="#c8c4bc"/></svg>
<svg style="left:557px;top:72px" width="16" height="16" viewBox="0 0 16 16"><rect x="3" y="0.500" width="10" height="9" fill="#58b868" stroke="#1838a0"/><rect x="5" y="2" width="6" height="6" fill="#b0d8c0"/><path d="M0.500 8.500h15v5h-15z" fill="#e8e8e0" stroke="#2c6c2c"/><rect x="1" y="13" width="14" height="2.500" fill="#405840"/><rect x="2" y="11" width="10" height="1" fill="#fff"/><rect x="12" y="10" width="2" height="1.500" fill="#f02020"/></svg>
<svg style="left:585px;top:72px" width="16" height="16" viewBox="0 0 16 16"><path d="M1.500 6.500c2-6 10-6 13 0" stroke="#000" stroke-width="1.200" stroke-dasharray="1 1.500" fill="none"/><path d="M12 6h4.500l-2.250 3z" fill="#000"/><rect x="5.500" y="9.500" width="7" height="6" fill="#fff" stroke="#2038a0" stroke-width="1.600"/></svg>
<svg style="left:614px;top:72px" width="16" height="16" viewBox="0 0 16 16"><path d="M5 0l1.500 2.500L9.500 1 8 4l3 .5-2.500 1.800" fill="#fff" stroke="#000" stroke-width=".7"/><g transform="translate(0 1)"><path d="M2 1.500c2-2 6-1 6.500 2l7 8v3h-2.500v-1.500h-1.500v-1.500h-1.500l-3.500-4c-3 1-6-2-4.500-6z" fill="#f8e820" stroke="#000" stroke-width="1"/><circle cx="4" cy="3.500" r="1.200" fill="#000"/></g><path d="M4 8l-2.500 5.500 2 .5 2-4.500z" fill="#f8e820" stroke="#000" stroke-width=".8"/></svg>
<svg style="left:644px;top:76px" width="17" height="11" viewBox="0 0 17 11"><path d="M1 9.500l3-8M12.500 9.500l3-8" stroke="#2858b8" stroke-width="1.100"/><path d="M4.500 5.500h3M6 4v3M9.500 5.500h3M11 4v3" stroke="#2858b8" stroke-width="1"/><rect x="5" y="8.500" width="1" height="1" fill="#2858b8"/><rect x="7.500" y="8.500" width="1" height="1" fill="#2858b8"/><rect x="10" y="8.500" width="1" height="1" fill="#2858b8"/></svg>
<svg style="left:667px;top:76px" width="17" height="11" viewBox="0 0 17 11"><path d="M1 9.500l3-8M12.500 9.500l3-8" stroke="#f01818" stroke-width="1.100"/><path d="M4.500 5.500h3M6 4v3M9.500 5.500h3M11 4v3" stroke="#f01818" stroke-width="1"/><rect x="5" y="8.500" width="1" height="1" fill="#f01818"/><rect x="7.500" y="8.500" width="1" height="1" fill="#f01818"/><rect x="10" y="8.500" width="1" height="1" fill="#f01818"/></svg>
<svg style="left:15px;top:702px" width="14" height="12" viewBox="0 0 14 12"><rect x="0.500" y="0.500" width="13" height="11" fill="#e8e8e4" stroke="#000"/><rect x="1" y="1" width="12" height="2" fill="#102870"/></svg>
<svg style="left:78px;top:700px" width="16" height="17" viewBox="0 0 16 17"><polygon points="15.26,5.81 15.26,7.19 13.69,7.49 13.31,8.41 14.20,9.73 13.23,10.70 11.91,9.81 10.99,10.19 10.69,11.76 9.31,11.76 9.01,10.19 8.09,9.81 6.77,10.70 5.80,9.73 6.69,8.41 6.31,7.49 4.74,7.19 4.74,5.81 6.31,5.51 6.69,4.59 5.80,3.27 6.77,2.30 8.09,3.19 9.01,2.81 9.31,1.24 10.69,1.24 10.99,2.81 11.91,3.19 13.23,2.30 14.20,3.27 13.31,4.59 13.69,5.51" fill="#3878e0" stroke="#1848a0" stroke-width=".6"/><circle cx="10" cy="6.5" r="1.59" fill="#d0e0ff"/><polygon points="9.96,10.85 9.96,12.15 8.48,12.43 8.12,13.30 8.96,14.55 8.05,15.46 6.80,14.62 5.93,14.98 5.65,16.46 4.35,16.46 4.07,14.98 3.20,14.62 1.95,15.46 1.04,14.55 1.88,13.30 1.52,12.43 0.04,12.15 0.04,10.85 1.52,10.57 1.88,9.70 1.04,8.45 1.95,7.54 3.20,8.38 4.07,8.02 4.35,6.54 5.65,6.54 5.93,8.02 6.80,8.38 8.05,7.54 8.96,8.45 8.12,9.70 8.48,10.57" fill="#40c818" stroke="#187808" stroke-width=".6"/><circle cx="5" cy="11.5" r="1.50" fill="#e8ffe0"/></svg>
<svg style="left:242px;top:700px" width="12" height="15" viewBox="0 0 12 15"><path d="M0.5 0.5h8l3 3v11h-11z" fill="#fff" stroke="#000"/><path d="M8.5 0.5v3h3" fill="none" stroke="#000"/></svg>
<svg style="left:5px;top:745px" width="16" height="16" viewBox="0 0 16 16"><path d="M1 3c2-1.500 4-1.500 6 0l-1 5c-2-1.500-4-1.500-6 0z" fill="#f05818"/><path d="M8 3.500c2 1.500 4 1.500 6.500 0l-1 5c-2.500 1.500-4.500 1.500-6.500 0z" fill="#58b828"/><path d="M0 9c2-1.500 4-1.500 6 0l-1 5c-2-1.500-4-1.500-6 0z" fill="#3878d8"/><path d="M7 9.500c2 1.500 4 1.500 6.500 0l-1 5c-2.500 1.500-4.500 1.500-6.500 0z" fill="#f8c818"/></svg>
<svg style="left:64px;top:746px" width="16" height="17" viewBox="0 0 16 17"><path d="M2 8h12M5 2.500L8 8l0 6M11 2.500L8 8" stroke="#484848" stroke-width=".8" fill="none"/><rect x="5" y="6" width="6" height="4" fill="#d0d0d0" stroke="#606060" stroke-width=".6"/><circle cx="5" cy="2.5" r="2" fill="#58c858" stroke="#186018" stroke-width=".8"/><circle cx="11" cy="2.5" r="2" fill="#58c858" stroke="#186018" stroke-width=".8"/><circle cx="2" cy="8" r="2" fill="#58c858" stroke="#186018" stroke-width=".8"/><circle cx="14" cy="8" r="2" fill="#58c858" stroke="#186018" stroke-width=".8"/><circle cx="8" cy="14" r="2" fill="#58c858" stroke="#186018" stroke-width=".8"/></svg>
<svg style="left:226px;top:747px" width="16" height="15" viewBox="0 0 16 15"><path d="M3.500 0.500h5l1.500 1.500h5v9h-11.500z" fill="#e8c848" stroke="#806010"/><path d="M0.500 3.500h5l1.500 1.500h6v9h-12.500z" fill="#f8e488" stroke="#806010"/><path d="M2 14l2-6h10l-2 6z" fill="#fff8c8" stroke="#a08020" stroke-width=".7"/></svg>
<svg style="left:389px;top:745px" width="16" height="16" viewBox="0 0 16 16"><circle cx="8" cy="8" r="7.500" fill="#3868c8"/><circle cx="7" cy="7" r="3.500" fill="#80b0f0"/><path d="M1 5c2-4 8-6 12-2c2 2 3 5 2 8c-1 3-5 5.500-9 4.500c-4-1-6-5-5.500-8c1 3 3 5 6 5c4 0 5-4 3-6c-2-2-5-1.500-6.500 0c0-2 1-3 2-3.500c-1.500-.5-3 .5-4 2z" fill="#f08018" stroke="#a04008" stroke-width=".5"/><path d="M1.500 7.500c.5 3 2.500 5 5.500 5c2.500 0 4-1.500 4-3" stroke="#f8d040" stroke-width="1.200" fill="none"/></svg>
<svg style="left:855px;top:749px" width="16" height="11" viewBox="0 0 16 11"><rect x="0.500" y="2.500" width="15" height="8" rx="1" fill="#4870c0" stroke="#203878"/><rect x="2" y="0.500" width="4" height="2.500" fill="#6088d0" stroke="#203878" stroke-width=".6"/><circle cx="9" cy="6.500" r="3.300" fill="#c0c8d8" stroke="#303848"/><circle cx="9" cy="6.500" r="1.600" fill="#202838"/></svg>
<svg style="left:873px;top:746px" width="16" height="16" viewBox="0 0 16 16"><polygon points="15.73,6.99 15.73,8.00 13.42,8.00 12.87,8.00 14.18,8.00 12.75,8.00 10.80,8.00 9.46,8.00 9.01,8.00 6.99,8.00 6.54,8.00 5.20,8.00 3.25,8.00 1.82,8.00 3.13,8.00 2.58,8.00 0.27,8.00 0.27,6.99 2.58,6.54 3.13,5.20 1.82,3.25 3.25,1.82 5.20,3.13 6.54,2.58 6.99,0.27 9.01,0.27 9.46,2.58 10.80,3.13 12.75,1.82 14.18,3.25 12.87,5.20 13.42,6.54" fill="#5888e0" stroke="#3060b0" stroke-width=".6"/><polygon points="15.73,8.00 15.73,9.01 13.42,9.46 12.87,10.80 14.18,12.75 12.75,14.18 10.80,12.87 9.46,13.42 9.01,15.73 6.99,15.73 6.54,13.42 5.20,12.87 3.25,14.18 1.82,12.75 3.13,10.80 2.58,9.46 0.27,9.01 0.27,8.00 2.58,8.00 3.13,8.00 1.82,8.00 3.25,8.00 5.20,8.00 6.54,8.00 6.99,8.00 9.01,8.00 9.46,8.00 10.80,8.00 12.75,8.00 14.18,8.00 12.87,8.00 13.42,8.00" fill="#f83878" stroke="#c01850" stroke-width=".6"/><circle cx="8" cy="8" r="3.200" fill="#d6d6ce"/></svg>
<span class="t" style="left:891px;top:745px;font-size:8px;line-height:8px;height:8px;color:#f4f040;letter-spacing:-0.3px">1.39</span>
<span class="t" style="left:891px;top:753px;font-size:8px;line-height:8px;height:8px;color:#f4f040;font-weight:bold;letter-spacing:-0.3px">GHz</span>
<svg style="left:909px;top:747px" width="16" height="15" viewBox="0 0 16 15"><rect x="0" y="0" width="16" height="15" fill="#000"/><rect x="1" y="1.0" width="6" height="1.400" fill="#20e020"/><rect x="9" y="1.0" width="6" height="1.400" fill="#20d8f0"/><rect x="1" y="3.4" width="6" height="1.400" fill="#20e020"/><rect x="9" y="3.4" width="6" height="1.400" fill="#20d8f0"/><rect x="1" y="5.8" width="6" height="1.400" fill="#20e020"/><rect x="9" y="5.8" width="6" height="1.400" fill="#20d8f0"/><rect x="1" y="8.2" width="6" height="1.400" fill="#20e020"/><rect x="9" y="8.2" width="6" height="1.400" fill="#20d8f0"/><rect x="1" y="10.6" width="6" height="1.400" fill="#20e020"/><rect x="9" y="10.6" width="6" height="1.400" fill="#20d8f0"/><rect x="1" y="13.0" width="6" height="1.400" fill="#20e020"/><rect x="9" y="13.0" width="6" height="1.400" fill="#20d8f0"/></svg>
<svg style="left:927px;top:746px" width="16" height="10" viewBox="0 0 16 10"><rect x="1.500" y="1.500" width="14" height="7" rx="1" fill="#285828" stroke="#184018"/><rect x="0" y="3.500" width="1.500" height="3" fill="#184018"/><path d="M4 3v4M6.500 3v4M9 3v4M11.500 3v4M14 3v4" stroke="#60e040" stroke-width="1.400"/></svg>
<span class="t" style="left:928px;top:755px;font-size:8px;line-height:8px;height:8px;color:#f4f040;font-weight:bold;letter-spacing:-0.2px">N/A</span>
<svg style="left:945px;top:746px" width="15" height="16" viewBox="0 0 15 16"><rect x="5.500" y="0.500" width="8" height="7" fill="#90c0f0" stroke="#5080c0"/><rect x="2.500" y="5.500" width="8" height="7" fill="#a8d0f8" stroke="#5080c0"/><rect x="4" y="7" width="5" height="4" fill="#d0e8ff"/><path d="M0.500 14.500c0-2 3-2 3.500-1c1-1.500 4-1 4 1z" fill="#fff" stroke="#a0c0e0" stroke-width=".5"/><path d="M10 12.500h4v2h-4z" fill="#6090d0"/></svg>
<svg style="left:963px;top:746px" width="16" height="16" viewBox="0 0 16 16"><rect x="0.500" y="0.500" width="15" height="15" rx="3" fill="#e8c818" stroke="#806808"/><path d="M2 8c3-4 9-4 12 0c-3 4-9 4-12 0z" fill="#f8f0c0" stroke="#000" stroke-width="1"/><circle cx="8" cy="8" r="2.200" fill="#000"/></svg>
<svg style="left:2px;top:1px" width="17" height="17" viewBox="0 0 17 17"><rect x="5" y="6" width="6.500" height="4.500" fill="#e0e0dc"/><rect x="5" y="6" width="1.500" height="4.500" fill="#909090"/><circle cx="5" cy="2.5" r="2.100" fill="#68d070" stroke="#08200c" stroke-width=".9"/><circle cx="10.5" cy="2.5" r="2.100" fill="#68d070" stroke="#08200c" stroke-width=".9"/><circle cx="2.5" cy="8.3" r="2.100" fill="#68d070" stroke="#08200c" stroke-width=".9"/><circle cx="14" cy="8.3" r="2.100" fill="#68d070" stroke="#08200c" stroke-width=".9"/><circle cx="10.5" cy="13.8" r="2.100" fill="#68d070" stroke="#08200c" stroke-width=".9"/></svg>
</body></html>
